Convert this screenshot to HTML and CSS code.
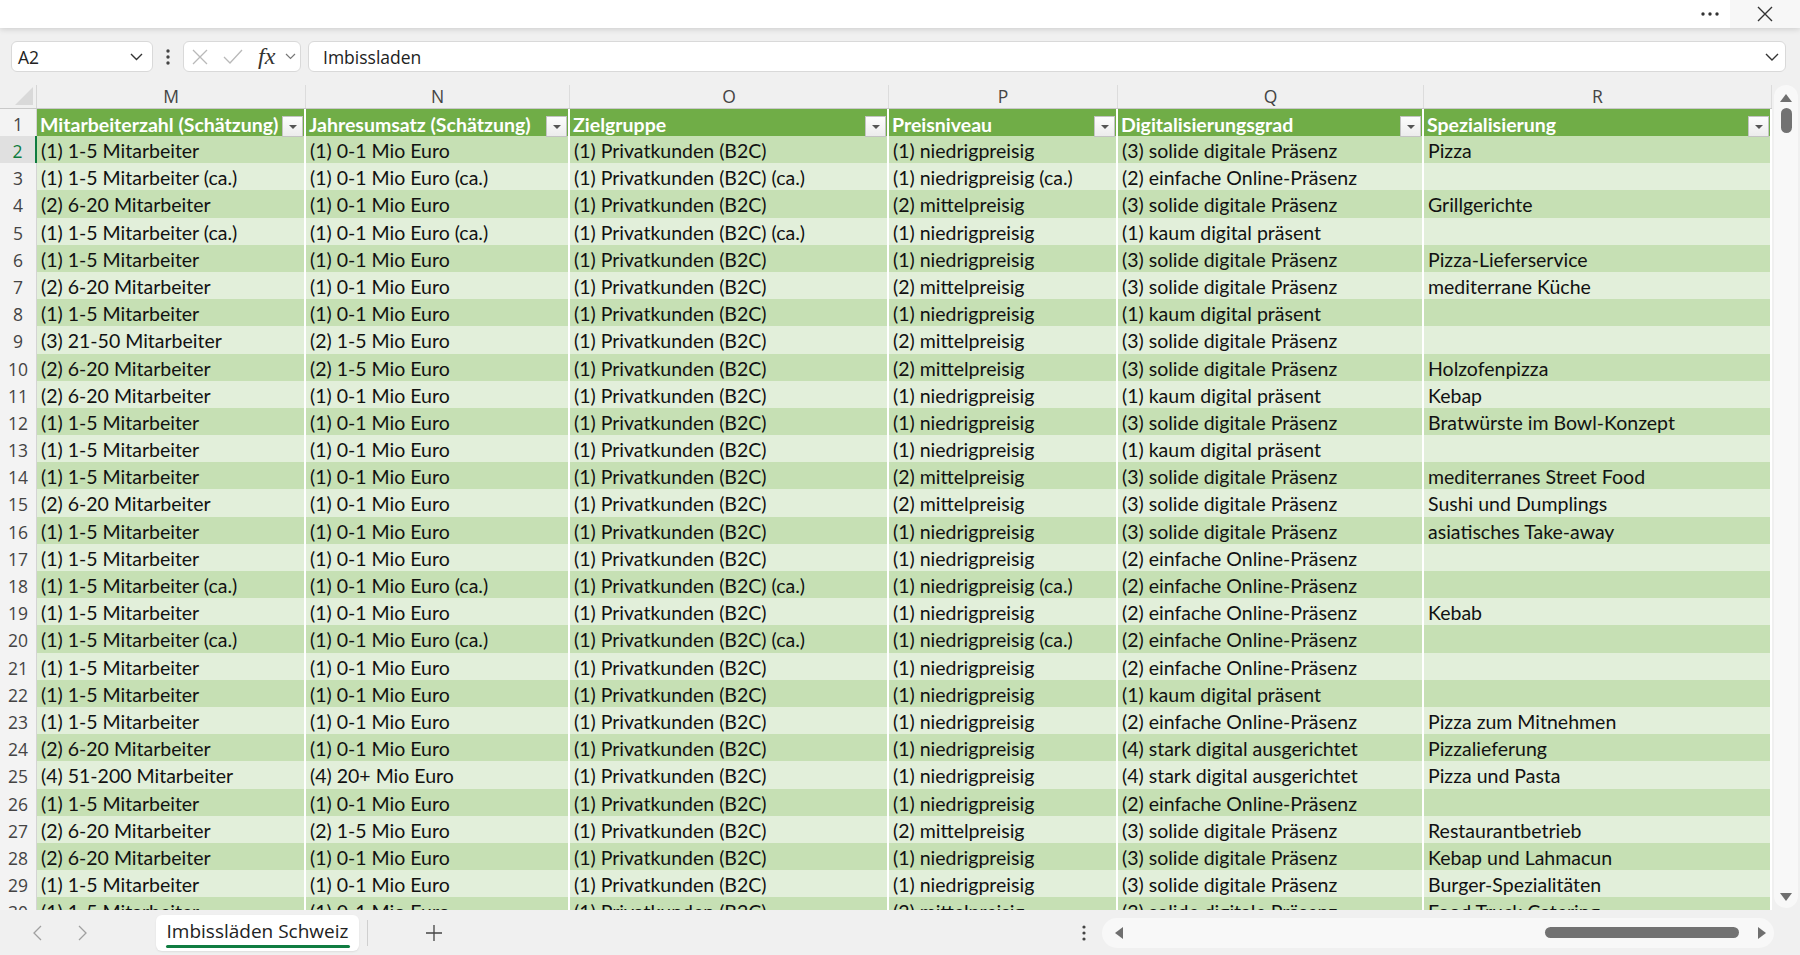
FILE: index.html
```html
<!DOCTYPE html>
<html lang="de">

<head>
  <meta charset="UTF-8">
  <title>Imbissläden Schweiz</title>
  <link rel="stylesheet" href="styles.css">
</head>

<body>
  <!-- Titelleiste -->
  <div class="titlebar">
    <span class="more">
      <svg width="20" height="6" viewBox="0 0 20 6"><circle cx="3" cy="3" r="1.7" fill="#333"/><circle cx="10" cy="3" r="1.7" fill="#333"/><circle cx="17" cy="3" r="1.7" fill="#333"/></svg>
    </span>
    <span class="close">
      <svg width="16" height="16" viewBox="0 0 16 16"><path d="M1 1 L15 15 M15 1 L1 15" stroke="#333" stroke-width="1.4" fill="none"/></svg>
    </span>
  </div>

  <!-- Bearbeitungsleiste -->
  <div class="formula-bar">
    <div class="name-box">
      <span>A2</span>
      <svg width="13" height="8" viewBox="0 0 13 8"><path d="M1 1 L6.5 6.5 L12 1" stroke="#333" stroke-width="1.4" fill="none"/></svg>
    </div>
    <span class="kebab">
      <svg width="4" height="16" viewBox="0 0 4 16"><circle cx="2" cy="2" r="1.7" fill="#444"/><circle cx="2" cy="8" r="1.7" fill="#444"/><circle cx="2" cy="14" r="1.7" fill="#444"/></svg>
    </span>
    <div class="fx-box">
      <svg width="16" height="16" viewBox="0 0 16 16"><path d="M1 1 L15 15 M15 1 L1 15" stroke="#b9b9b9" stroke-width="1.3" fill="none"/></svg>
      <svg width="20" height="15" viewBox="0 0 20 15"><path d="M1 8 L7 14 L19 1" stroke="#b9b9b9" stroke-width="1.3" fill="none"/></svg>
      <span class="fx">fx</span>
      <svg class="fx-arrow" width="11" height="7" viewBox="0 0 11 7"><path d="M1 1 L5.5 5.5 L10 1" stroke="#777" stroke-width="1.2" fill="none"/></svg>
    </div>
    <div class="formula-input">
      <span>Imbissladen</span>
      <svg width="14" height="8" viewBox="0 0 14 8"><path d="M1 1 L7 7 L13 1" stroke="#333" stroke-width="1.4" fill="none"/></svg>
    </div>
  </div>

  <!-- Tabellenbereich -->
  <div class="sheet">
    <div class="grid">
      <div class="row col-heads">
        <div class="corner"></div>
        <div class="ch">M</div><div class="ch">N</div><div class="ch">O</div><div class="ch">P</div><div class="ch">Q</div><div class="ch">R</div>
      </div>

      <div class="row head-row">
        <div class="rh">1</div>
        <div class="hc"><span>Mitarbeiterzahl (Schätzung)</span><i class="filter"></i></div>
        <div class="hc"><span>Jahresumsatz (Schätzung)</span><i class="filter"></i></div>
        <div class="hc"><span>Zielgruppe</span><i class="filter"></i></div>
        <div class="hc"><span>Preisniveau</span><i class="filter"></i></div>
        <div class="hc"><span>Digitalisierungsgrad</span><i class="filter"></i></div>
        <div class="hc"><span>Spezialisierung</span><i class="filter"></i></div>
      </div>

      <div class="row dark"><div class="rh active">2</div><div class="c">(1) 1-5 Mitarbeiter</div><div class="c">(1) 0-1 Mio Euro</div><div class="c">(1) Privatkunden (B2C)</div><div class="c">(1) niedrigpreisig</div><div class="c">(3) solide digitale Präsenz</div><div class="c">Pizza</div></div>
      <div class="row light"><div class="rh">3</div><div class="c">(1) 1-5 Mitarbeiter (ca.)</div><div class="c">(1) 0-1 Mio Euro (ca.)</div><div class="c">(1) Privatkunden (B2C) (ca.)</div><div class="c">(1) niedrigpreisig (ca.)</div><div class="c">(2) einfache Online-Präsenz</div><div class="c"></div></div>
      <div class="row dark"><div class="rh">4</div><div class="c">(2) 6-20 Mitarbeiter</div><div class="c">(1) 0-1 Mio Euro</div><div class="c">(1) Privatkunden (B2C)</div><div class="c">(2) mittelpreisig</div><div class="c">(3) solide digitale Präsenz</div><div class="c">Grillgerichte</div></div>
      <div class="row light"><div class="rh">5</div><div class="c">(1) 1-5 Mitarbeiter (ca.)</div><div class="c">(1) 0-1 Mio Euro (ca.)</div><div class="c">(1) Privatkunden (B2C) (ca.)</div><div class="c">(1) niedrigpreisig</div><div class="c">(1) kaum digital präsent</div><div class="c"></div></div>
      <div class="row dark"><div class="rh">6</div><div class="c">(1) 1-5 Mitarbeiter</div><div class="c">(1) 0-1 Mio Euro</div><div class="c">(1) Privatkunden (B2C)</div><div class="c">(1) niedrigpreisig</div><div class="c">(3) solide digitale Präsenz</div><div class="c">Pizza-Lieferservice</div></div>
      <div class="row light"><div class="rh">7</div><div class="c">(2) 6-20 Mitarbeiter</div><div class="c">(1) 0-1 Mio Euro</div><div class="c">(1) Privatkunden (B2C)</div><div class="c">(2) mittelpreisig</div><div class="c">(3) solide digitale Präsenz</div><div class="c">mediterrane Küche</div></div>
      <div class="row dark"><div class="rh">8</div><div class="c">(1) 1-5 Mitarbeiter</div><div class="c">(1) 0-1 Mio Euro</div><div class="c">(1) Privatkunden (B2C)</div><div class="c">(1) niedrigpreisig</div><div class="c">(1) kaum digital präsent</div><div class="c"></div></div>
      <div class="row light"><div class="rh">9</div><div class="c">(3) 21-50 Mitarbeiter</div><div class="c">(2) 1-5 Mio Euro</div><div class="c">(1) Privatkunden (B2C)</div><div class="c">(2) mittelpreisig</div><div class="c">(3) solide digitale Präsenz</div><div class="c"></div></div>
      <div class="row dark"><div class="rh">10</div><div class="c">(2) 6-20 Mitarbeiter</div><div class="c">(2) 1-5 Mio Euro</div><div class="c">(1) Privatkunden (B2C)</div><div class="c">(2) mittelpreisig</div><div class="c">(3) solide digitale Präsenz</div><div class="c">Holzofenpizza</div></div>
      <div class="row light"><div class="rh">11</div><div class="c">(2) 6-20 Mitarbeiter</div><div class="c">(1) 0-1 Mio Euro</div><div class="c">(1) Privatkunden (B2C)</div><div class="c">(1) niedrigpreisig</div><div class="c">(1) kaum digital präsent</div><div class="c">Kebap</div></div>
      <div class="row dark"><div class="rh">12</div><div class="c">(1) 1-5 Mitarbeiter</div><div class="c">(1) 0-1 Mio Euro</div><div class="c">(1) Privatkunden (B2C)</div><div class="c">(1) niedrigpreisig</div><div class="c">(3) solide digitale Präsenz</div><div class="c">Bratwürste im Bowl-Konzept</div></div>
      <div class="row light"><div class="rh">13</div><div class="c">(1) 1-5 Mitarbeiter</div><div class="c">(1) 0-1 Mio Euro</div><div class="c">(1) Privatkunden (B2C)</div><div class="c">(1) niedrigpreisig</div><div class="c">(1) kaum digital präsent</div><div class="c"></div></div>
      <div class="row dark"><div class="rh">14</div><div class="c">(1) 1-5 Mitarbeiter</div><div class="c">(1) 0-1 Mio Euro</div><div class="c">(1) Privatkunden (B2C)</div><div class="c">(2) mittelpreisig</div><div class="c">(3) solide digitale Präsenz</div><div class="c">mediterranes Street Food</div></div>
      <div class="row light"><div class="rh">15</div><div class="c">(2) 6-20 Mitarbeiter</div><div class="c">(1) 0-1 Mio Euro</div><div class="c">(1) Privatkunden (B2C)</div><div class="c">(2) mittelpreisig</div><div class="c">(3) solide digitale Präsenz</div><div class="c">Sushi und Dumplings</div></div>
      <div class="row dark"><div class="rh">16</div><div class="c">(1) 1-5 Mitarbeiter</div><div class="c">(1) 0-1 Mio Euro</div><div class="c">(1) Privatkunden (B2C)</div><div class="c">(1) niedrigpreisig</div><div class="c">(3) solide digitale Präsenz</div><div class="c">asiatisches Take-away</div></div>
      <div class="row light"><div class="rh">17</div><div class="c">(1) 1-5 Mitarbeiter</div><div class="c">(1) 0-1 Mio Euro</div><div class="c">(1) Privatkunden (B2C)</div><div class="c">(1) niedrigpreisig</div><div class="c">(2) einfache Online-Präsenz</div><div class="c"></div></div>
      <div class="row dark"><div class="rh">18</div><div class="c">(1) 1-5 Mitarbeiter (ca.)</div><div class="c">(1) 0-1 Mio Euro (ca.)</div><div class="c">(1) Privatkunden (B2C) (ca.)</div><div class="c">(1) niedrigpreisig (ca.)</div><div class="c">(2) einfache Online-Präsenz</div><div class="c"></div></div>
      <div class="row light"><div class="rh">19</div><div class="c">(1) 1-5 Mitarbeiter</div><div class="c">(1) 0-1 Mio Euro</div><div class="c">(1) Privatkunden (B2C)</div><div class="c">(1) niedrigpreisig</div><div class="c">(2) einfache Online-Präsenz</div><div class="c">Kebab</div></div>
      <div class="row dark"><div class="rh">20</div><div class="c">(1) 1-5 Mitarbeiter (ca.)</div><div class="c">(1) 0-1 Mio Euro (ca.)</div><div class="c">(1) Privatkunden (B2C) (ca.)</div><div class="c">(1) niedrigpreisig (ca.)</div><div class="c">(2) einfache Online-Präsenz</div><div class="c"></div></div>
      <div class="row light"><div class="rh">21</div><div class="c">(1) 1-5 Mitarbeiter</div><div class="c">(1) 0-1 Mio Euro</div><div class="c">(1) Privatkunden (B2C)</div><div class="c">(1) niedrigpreisig</div><div class="c">(2) einfache Online-Präsenz</div><div class="c"></div></div>
      <div class="row dark"><div class="rh">22</div><div class="c">(1) 1-5 Mitarbeiter</div><div class="c">(1) 0-1 Mio Euro</div><div class="c">(1) Privatkunden (B2C)</div><div class="c">(1) niedrigpreisig</div><div class="c">(1) kaum digital präsent</div><div class="c"></div></div>
      <div class="row light"><div class="rh">23</div><div class="c">(1) 1-5 Mitarbeiter</div><div class="c">(1) 0-1 Mio Euro</div><div class="c">(1) Privatkunden (B2C)</div><div class="c">(1) niedrigpreisig</div><div class="c">(2) einfache Online-Präsenz</div><div class="c">Pizza zum Mitnehmen</div></div>
      <div class="row dark"><div class="rh">24</div><div class="c">(2) 6-20 Mitarbeiter</div><div class="c">(1) 0-1 Mio Euro</div><div class="c">(1) Privatkunden (B2C)</div><div class="c">(1) niedrigpreisig</div><div class="c">(4) stark digital ausgerichtet</div><div class="c">Pizzalieferung</div></div>
      <div class="row light"><div class="rh">25</div><div class="c">(4) 51-200 Mitarbeiter</div><div class="c">(4) 20+ Mio Euro</div><div class="c">(1) Privatkunden (B2C)</div><div class="c">(1) niedrigpreisig</div><div class="c">(4) stark digital ausgerichtet</div><div class="c">Pizza und Pasta</div></div>
      <div class="row dark"><div class="rh">26</div><div class="c">(1) 1-5 Mitarbeiter</div><div class="c">(1) 0-1 Mio Euro</div><div class="c">(1) Privatkunden (B2C)</div><div class="c">(1) niedrigpreisig</div><div class="c">(2) einfache Online-Präsenz</div><div class="c"></div></div>
      <div class="row light"><div class="rh">27</div><div class="c">(2) 6-20 Mitarbeiter</div><div class="c">(2) 1-5 Mio Euro</div><div class="c">(1) Privatkunden (B2C)</div><div class="c">(2) mittelpreisig</div><div class="c">(3) solide digitale Präsenz</div><div class="c">Restaurantbetrieb</div></div>
      <div class="row dark"><div class="rh">28</div><div class="c">(2) 6-20 Mitarbeiter</div><div class="c">(1) 0-1 Mio Euro</div><div class="c">(1) Privatkunden (B2C)</div><div class="c">(1) niedrigpreisig</div><div class="c">(3) solide digitale Präsenz</div><div class="c">Kebap und Lahmacun</div></div>
      <div class="row light"><div class="rh">29</div><div class="c">(1) 1-5 Mitarbeiter</div><div class="c">(1) 0-1 Mio Euro</div><div class="c">(1) Privatkunden (B2C)</div><div class="c">(1) niedrigpreisig</div><div class="c">(3) solide digitale Präsenz</div><div class="c">Burger-Spezialitäten</div></div>
      <div class="row dark"><div class="rh">30</div><div class="c">(1) 1-5 Mitarbeiter</div><div class="c">(1) 0-1 Mio Euro</div><div class="c">(1) Privatkunden (B2C)</div><div class="c">(2) mittelpreisig</div><div class="c">(3) solide digitale Präsenz</div><div class="c">Food Truck Catering</div></div>
    </div>

    <!-- vertikale Bildlaufleiste -->
    <div class="vscroll">
      <svg width="12" height="8" viewBox="0 0 12 8"><polygon points="6,0 12,8 0,8" fill="#6f6f6f"/></svg>
      <div class="vthumb"></div>
      <svg class="down" width="12" height="8" viewBox="0 0 12 8"><polygon points="0,0 12,0 6,8" fill="#6f6f6f"/></svg>
    </div>
  </div>

  <!-- Blattregister -->
  <div class="tabbar">
    <span class="nav">
      <svg width="9" height="16" viewBox="0 0 9 16"><path d="M8 1 L1 8 L8 15" stroke="#a0a0a0" stroke-width="1.3" fill="none"/></svg>
    </span>
    <span class="nav">
      <svg width="9" height="16" viewBox="0 0 9 16"><path d="M1 1 L8 8 L1 15" stroke="#a0a0a0" stroke-width="1.3" fill="none"/></svg>
    </span>
    <div class="tab">Imbissläden Schweiz</div>
    <span class="tab-sep"></span>
    <span class="add">
      <svg width="18" height="18" viewBox="0 0 18 18"><path d="M9 1 V17 M1 9 H17" stroke="#444" stroke-width="1.3" fill="none"/></svg>
    </span>
    <span class="tab-kebab">
      <svg width="4" height="16" viewBox="0 0 4 16"><circle cx="2" cy="2" r="1.6" fill="#444"/><circle cx="2" cy="8" r="1.6" fill="#444"/><circle cx="2" cy="14" r="1.6" fill="#444"/></svg>
    </span>
    <div class="hscroll">
      <svg width="8" height="12" viewBox="0 0 8 12"><polygon points="0,6 8,0 8,12" fill="#6f6f6f"/></svg>
      <div class="hthumb"></div>
      <svg class="right" width="8" height="12" viewBox="0 0 8 12"><polygon points="0,0 8,6 0,12" fill="#6f6f6f"/></svg>
    </div>
  </div>
</body>

</html>
```

FILE: styles.css
```css
/* Grundeinstellungen */
* {
  margin: 0;
  padding: 0;
  box-sizing: border-box;
}

body {
  width: 1800px;
  height: 955px;
  overflow: hidden;
  background: #f0f0f0;
  font-family: "Open Sans", "Noto Sans", sans-serif;
  color: #222;
  display: flex;
  flex-direction: column;
}

/* Titelleiste */
.titlebar {
  height: 28px;
  flex: none;
  background: #fff;
  box-shadow: 0 1px 6px rgba(0, 0, 0, 0.16);
  display: flex;
  justify-content: flex-end;
  align-items: center;
  position: relative;
  z-index: 1;
}

.titlebar .more {
  width: 40px;
  height: 28px;
  display: flex;
  align-items: center;
  justify-content: center;
}

.titlebar .close {
  width: 70px;
  height: 28px;
  display: flex;
  align-items: center;
  justify-content: center;
  background: #f7f7f7;
}

/* Bearbeitungsleiste */
.formula-bar {
  flex: none;
  height: 31px;
  margin-top: 13px;
  padding-left: 11px;
  display: flex;
  align-items: stretch;
}

.name-box,
.fx-box,
.formula-input {
  background: #fff;
  border: 1px solid #d9d9d9;
  border-radius: 6px;
  display: flex;
  align-items: center;
}

.name-box {
  width: 142px;
  padding: 0 9px 0 6px;
  justify-content: space-between;
  font-size: 17.5px;
}

.kebab {
  width: 30px;
  display: flex;
  align-items: center;
  justify-content: center;
}

.fx-box {
  width: 118px;
  padding-left: 8px;
  gap: 15px;
}

.fx-box .fx {
  font-family: "Liberation Serif", serif;
  font-style: italic;
  font-size: 24px;
  color: #333;
  line-height: 1;
  margin-top: -2px;
}

.fx-box .fx-arrow {
  margin-left: -5px;
}

.formula-input {
  width: 1478px;
  margin-left: 7px;
  padding: 0 6px 0 14px;
  justify-content: space-between;
  font-size: 17.5px;
}

/* Tabellenbereich */
.sheet {
  flex: none;
  height: 825px;
  margin-top: 13px;
  display: flex;
}

.grid {
  width: 1772px;
  overflow: hidden;
}

.row {
  display: grid;
  grid-template-columns: 37px 269px 264px 319px 229px 306px 348px;
  height: 27.2px;
}

/* Spaltenköpfe */
.col-heads {
  height: 24px;
  border-bottom: 1px solid #c9c9c9;
}

.corner {
  background: #f0f0f0;
  border-right: 1px solid #d6d6d6;
  position: relative;
}

.corner::after {
  content: '';
  position: absolute;
  right: 3px;
  bottom: 3px;
  width: 18px;
  height: 18px;
  background: #d9d9d9;
  clip-path: polygon(100% 0, 100% 100%, 0 100%);
}

.ch {
  text-align: center;
  font-size: 17.5px;
  line-height: 23px;
  color: #444;
  border-right: 1px solid #dcdcdc;
}

/* Zeilenköpfe */
.rh {
  background: #f3f3f3;
  border-right: 1px solid #d4d4d4;
  border-bottom: 1px solid #e3e3e3;
  text-align: center;
  font-size: 17.5px;
  line-height: 30px;
  color: #444;
}

.rh.active {
  background: #e0e0e0;
  color: #107c41;
  border-right: 2px solid #107c41;
}

/* Tabellenkopf (Zeile 1) */
.head-row {
  height: 27px;
}

.hc {
  background: #70ad47;
  border-right: 2px solid #fff;
  border-bottom: 3px solid #fff;
  padding: 4px 1px 0 3px;
  display: flex;
  justify-content: space-between;
  align-items: center;
  font-family: Lato, "Liberation Sans", sans-serif;
  font-weight: 700;
  font-size: 19.5px;
  line-height: 24px;
  color: #fff;
  white-space: nowrap;
}

.filter {
  flex: none;
  align-self: flex-end;
  width: 21px;
  height: 21px;
  background: linear-gradient(#fdfdfd, #ececec);
  border: 1px solid #c3c3c3;
  position: relative;
}

.filter::after {
  content: '';
  position: absolute;
  left: 6px;
  top: 8px;
  border-left: 4px solid transparent;
  border-right: 4px solid transparent;
  border-top: 4px solid #555;
}

/* Datenzellen */
.c {
  border-right: 2px solid #fff;
  border-bottom: 2px solid #fff;
  padding: 1px 0 0 4px;
  font-family: Lato, "Liberation Sans", sans-serif;
  font-size: 19.5px;
  line-height: 27px;
  color: #111;
  white-space: nowrap;
  overflow: hidden;
}

.dark .c {
  background: #c6e0b4;
}

.light .c {
  background: #e2efda;
}

/* Bildlaufleisten */
.vscroll {
  width: 24px;
  margin: 0 0 2px 2px;
  background: #f8f8f8;
  border-radius: 12px;
  display: flex;
  flex-direction: column;
  align-items: center;
  padding: 9px 0 7px;
}

.vthumb {
  width: 11px;
  height: 25px;
  margin-top: 6px;
  background: #727272;
  border-radius: 6px;
}

.vscroll .down {
  margin-top: auto;
}

.tabbar {
  flex: none;
  height: 45px;
  display: flex;
  align-items: center;
  padding-left: 28px;
}

.nav {
  width: 18px;
  display: flex;
  justify-content: center;
}

.nav + .nav {
  margin-left: 27px;
}

.tab {
  width: 203px;
  height: 36px;
  margin-left: 65px;
  background: #fff;
  border-radius: 6px;
  box-shadow: 0 1px 2px rgba(0, 0, 0, 0.08);
  font-size: 19px;
  line-height: 33px;
  text-align: center;
  color: #222;
  position: relative;
}

.tab::after {
  content: '';
  position: absolute;
  left: 10px;
  right: 9px;
  bottom: 3px;
  height: 3px;
  border-radius: 2px;
  background: #107c41;
}

.tab-sep {
  width: 1px;
  height: 26px;
  margin-left: 8px;
  background: #cfcfcf;
}

.add {
  width: 20px;
  margin-left: 56px;
  display: flex;
  justify-content: center;
}

.tab-kebab {
  width: 16px;
  margin-left: 632px;
  display: flex;
  justify-content: center;
}

.hscroll {
  width: 672px;
  height: 30px;
  margin-left: 10px;
  background: #f8f8f8;
  border-radius: 15px;
  display: flex;
  align-items: center;
  padding-left: 13px;
}

.hthumb {
  width: 194px;
  height: 11px;
  margin-left: 422px;
  background: #727272;
  border-radius: 6px;
}

.hscroll .right {
  margin-left: 19px;
}
```
